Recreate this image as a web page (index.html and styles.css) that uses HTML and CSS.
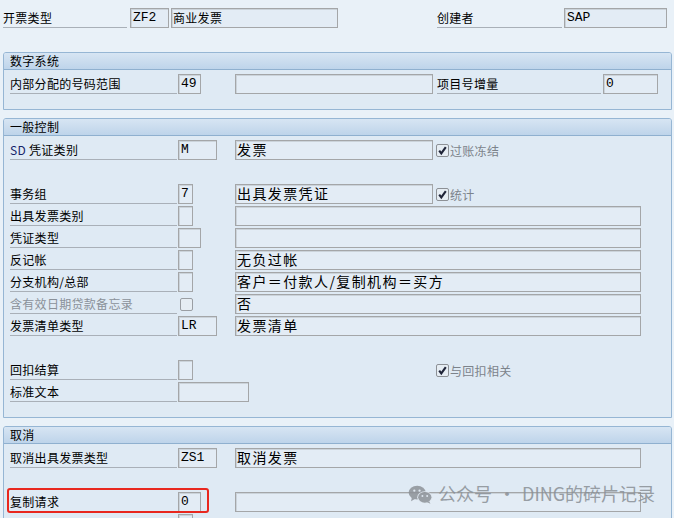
FILE: index.html
```html
<!DOCTYPE html>
<html>
<head>
<meta charset="utf-8">
<link rel="stylesheet" href="styles.css">
</head>
<body>
<div class="top-row">
  <div class="lbl lbl-top">开票类型</div>
  <div class="fld mono w38">ZF2</div>
  <div class="fld small ml2 w166">商业发票</div>
  <div class="lbl lbl-creator">创建者</div>
  <div class="fld mono w102">SAP</div>
</div>

<div class="group">
  <div class="ghead">数字系统</div>
  <div class="gbody">
    <div class="row">
      <div class="lbl">内部分配的号码范围</div>
      <div class="code"><div class="fld mono w22">49</div></div>
      <div class="fld cjk w197"></div>
      <div class="lbl lbl-right">项目号增量</div>
      <div class="fld mono w54">0</div>
    </div>
  </div>
</div>

<div class="group">
  <div class="ghead">一般控制</div>
  <div class="gbody">
    <div class="row">
      <div class="lbl"><span class="sd">SD</span>&nbsp;凭证类别</div>
      <div class="code"><div class="fld mono w38">M</div></div>
      <div class="fld cjk w197">发票</div>
      <div class="chkwrap"><span class="chk on"><svg viewBox="0 0 11 11" width="11" height="11"><path d="M2.2 5.6 L4.3 8.4 L8.8 2.2" fill="none" stroke="#1f2438" stroke-width="2.1"/></svg></span><span class="chklbl">过账冻结</span></div>
    </div>
    <div class="row"></div>
    <div class="row">
      <div class="lbl">事务组</div>
      <div class="code"><div class="fld mono w14">7</div></div>
      <div class="fld cjk w197">出具发票凭证</div>
      <div class="chkwrap"><span class="chk on"><svg viewBox="0 0 11 11" width="11" height="11"><path d="M2.2 5.6 L4.3 8.4 L8.8 2.2" fill="none" stroke="#1f2438" stroke-width="2.1"/></svg></span><span class="chklbl">统计</span></div>
    </div>
    <div class="row">
      <div class="lbl">出具发票类别</div>
      <div class="code"><div class="fld mono w14"></div></div>
      <div class="fld cjk w405"></div>
    </div>
    <div class="row">
      <div class="lbl">凭证类型</div>
      <div class="code"><div class="fld mono w22"></div></div>
      <div class="fld cjk w405"></div>
    </div>
    <div class="row">
      <div class="lbl">反记帐</div>
      <div class="code"><div class="fld mono w14"></div></div>
      <div class="fld cjk w405">无负过帐</div>
    </div>
    <div class="row">
      <div class="lbl">分支机构/总部</div>
      <div class="code"><div class="fld mono w14"></div></div>
      <div class="fld cjk w405">客户＝付款人/复制机构＝买方</div>
    </div>
    <div class="row">
      <div class="lbl grey">含有效日期贷款备忘录</div>
      <div class="code"><span class="chk off"></span></div>
      <div class="fld cjk w405">否</div>
    </div>
    <div class="row">
      <div class="lbl">发票清单类型</div>
      <div class="code"><div class="fld mono w38">LR</div></div>
      <div class="fld cjk w405">发票清单</div>
    </div>
    <div class="row"></div>
    <div class="row">
      <div class="lbl">回扣结算</div>
      <div class="code"><div class="fld mono w14"></div></div>
      <div class="w197"></div>
      <div class="chkwrap"><span class="chk on"><svg viewBox="0 0 11 11" width="11" height="11"><path d="M2.2 5.6 L4.3 8.4 L8.8 2.2" fill="none" stroke="#1f2438" stroke-width="2.1"/></svg></span><span class="chklbl">与回扣相关</span></div>
    </div>
    <div class="row">
      <div class="lbl">标准文本</div>
      <div class="code"><div class="fld mono w70"></div></div>
    </div>
  </div>
</div>

<div class="group">
  <div class="ghead">取消</div>
  <div class="gbody">
    <div class="row">
      <div class="lbl">取消出具发票类型</div>
      <div class="code"><div class="fld mono w38">ZS1</div></div>
      <div class="fld cjk w405">取消发票</div>
    </div>
    <div class="row"></div>
    <div class="row marked">
      <div class="lbl">复制请求</div>
      <div class="code"><div class="fld mono w22">0</div></div>
      <div class="fld cjk w405"></div>
      <div class="redbox"></div>
    </div>
    <div class="row">
      <div class="lbl nolines"></div>
      <div class="code"><div class="fld mono w14"></div></div>
    </div>
  </div>
</div>

<div class="watermark">
  <svg class="wxicon" viewBox="0 0 26 20" width="25" height="19">
    <ellipse cx="9.5" cy="8" rx="9" ry="7.3" fill="#8d9298"/>
    <path d="M4 13 L3 17 L7.5 14.5 Z" fill="#8d9298"/>
    <ellipse cx="17.5" cy="13" rx="8" ry="6.3" fill="#dfe7ef"/>
    <ellipse cx="17.5" cy="13" rx="7" ry="5.6" fill="#8d9298"/>
    <path d="M22 17 L23.5 19.8 L19.5 18 Z" fill="#8d9298"/>
    <circle cx="6.5" cy="6" r="1.2" fill="#dfe7ef"/>
    <circle cx="12" cy="6" r="1.2" fill="#dfe7ef"/>
    <circle cx="15" cy="11.5" r="1" fill="#dfe7ef"/>
    <circle cx="20" cy="11.5" r="1" fill="#dfe7ef"/>
  </svg>
  <span class="wmtext">公众号<span class="dot">·</span>DING的碎片记录</span>
</div>
</body>
</html>
```

FILE: styles.css
```css
html, body {
  margin: 0;
  padding: 0;
}
html { overflow: hidden; }
body {
  background: #e9f1f8;
  padding-top: 8px;
  width: 674px;
  height: 510px;
  overflow: hidden;
  position: relative;
  font-family: "Noto Sans CJK SC", "Noto Sans", sans-serif;
  font-size: 12px;
  color: #000;
}
.top-row {
  display: flex;
  height: 20px;
  padding-left: 3px;
}
.lbl {
  box-sizing: border-box;
  width: 167px;
  margin-right: 1px;
  height: 20px;
  line-height: 20px;
  border-bottom: 1px solid #a9b0b8;
  white-space: nowrap;
  letter-spacing: 0.3px;
  flex: none;
}
.lbl-top { width: 124px; margin-right: 3px; }
.lbl-creator { width: 125px; margin-left: 99px; margin-right: 2px; }
.lbl-right { width: 164px; margin-left: 4px; margin-right: 2px; }
.lbl.grey { color: #8a9199; }
.sd { color: #16246a; }
.fld {
  box-sizing: border-box;
  height: 20px;
  border: 1px solid #a4a6a8;
  box-shadow: inset 1px 1px 0 #cbd3da;
  background: #e3ecf5;
  white-space: nowrap;
  overflow: hidden;
  flex: none;
}
.mono {
  font-family: "Liberation Mono", monospace;
  font-size: 13px;
  line-height: 18px;
  padding-left: 2px;
}
.small {
  font-size: 12px;
  line-height: 18px;
  padding-left: 1px;
  letter-spacing: 0.3px;
}
.cjk {
  font-size: 14px;
  line-height: 17px;
  padding-left: 1px;
  letter-spacing: 1.4px;
}
.ml2 { margin-left: 2px; }
.w14 { width: 15px; }
.w22 { width: 23px; }
.w38 { width: 39px; }
.w54 { width: 55px; }
.w70 { width: 71px; }
.w102 { width: 103px; }
.w166 { width: 167px; }
.w197 { width: 198px; flex: none; }
.w405 { width: 406px; }

.group {
  margin: 24px 2px 8px 3px;
  border: 1px solid #96b6d4;
  border-radius: 3px 3px 0 0;
  background: #dfeaf4;
}
.group + .group { margin-top: 0; }
.ghead {
  height: 16px;
  line-height: 16px;
  padding-left: 6px;
  border-bottom: 1px solid #8fb0cf;
  background: linear-gradient(#d7e5f3, #bed4ea);
  border-radius: 2px 2px 0 0;
  letter-spacing: 0.3px;
}
.gbody {
  padding: 4px 0 13px 6px;
}
.row {
  display: flex;
  height: 20px;
  margin-bottom: 2px;
  position: relative;
}
.code {
  width: 57px;
  flex: none;
  display: flex;
  align-items: center;
}
.chkwrap {
  display: flex;
  align-items: center;
  margin-left: 3px;
  color: #7c838b;
  letter-spacing: 0.3px;
}
.chk {
  box-sizing: border-box;
  width: 13px;
  height: 13px;
  border: 1px solid #8d9196;
  border-radius: 2px;
  background: #e6edf3;
  display: flex;
  align-items: center;
  justify-content: center;
  flex: none;
}
.chk.off { margin-left: 2px; border-color: #9a9ea3; }
.chklbl { margin-left: 1px; }
.nolines { border-bottom: none; }
.redbox {
  position: absolute;
  left: -3px;
  top: -4px;
  width: 202px;
  height: 25px;
  box-sizing: border-box;
  border: 2px solid #e8281f;
  border-radius: 3px;
}
.watermark {
  position: absolute;
  left: 408px;
  top: 480px;
  display: flex;
  align-items: center;
  opacity: 0.85;
}
.wxicon { margin-right: 5px; margin-top: 2px; }
.wmtext {
  font-size: 18px;
  color: #8a9096;
  letter-spacing: 0;
}
.dot { margin: 0 6px; }
```
